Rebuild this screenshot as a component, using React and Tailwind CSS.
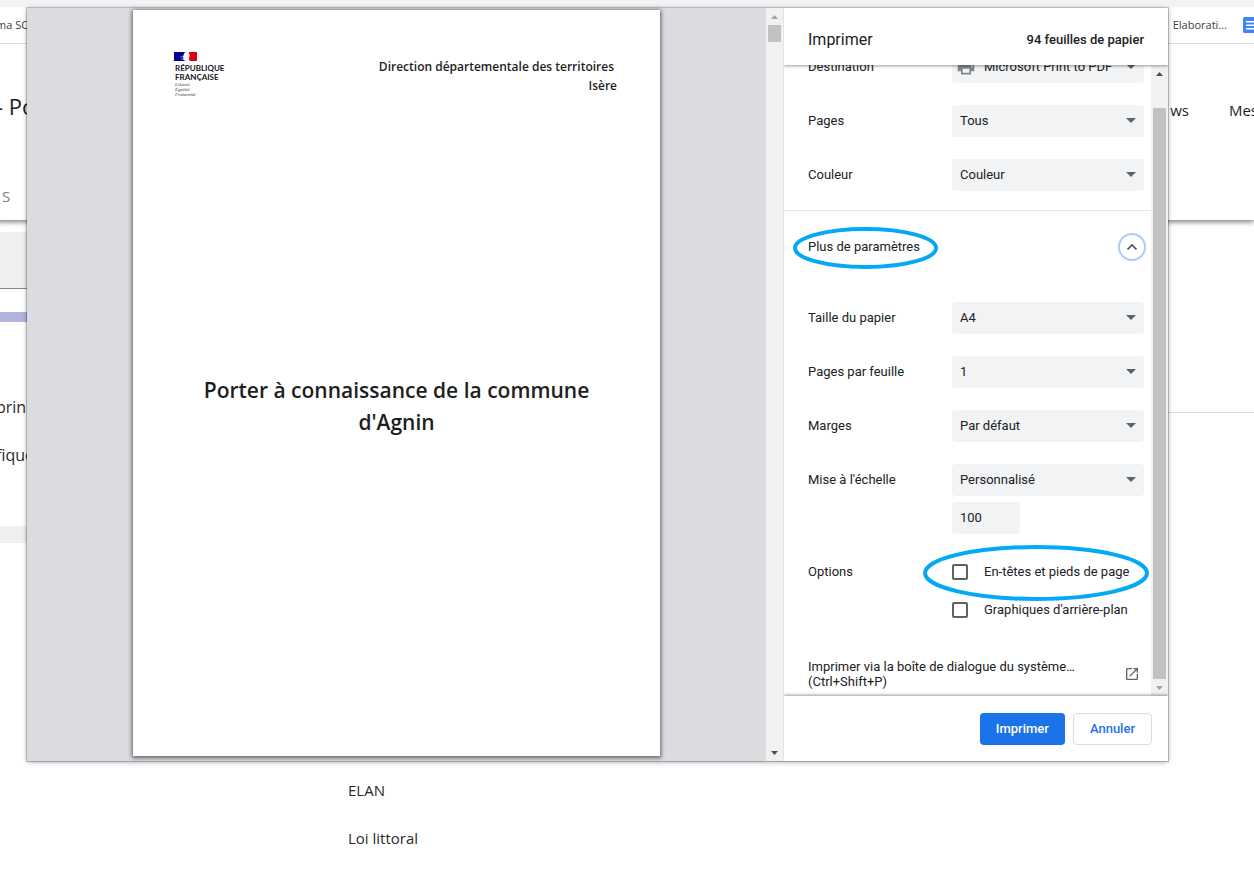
import React from "react";

function Caret() {
  return (
    <svg className="pointer-events-none absolute right-2 top-[13px] h-[5px] w-[10px]" viewBox="0 0 10 5" aria-hidden="true">
      <path d="M0 0h10L5 5z" fill="#5f6368" />
    </svg>
  );
}

function SelectBox({ id, value, icon }) {
  return (
    <div className="relative h-8">
      {icon}
      <select
        id={id}
        className={
          icon
            ? "h-8 w-full appearance-none rounded bg-[#f1f3f4] pl-8 pr-6 text-[13px] leading-5 text-[#202124]"
            : "h-8 w-full appearance-none rounded bg-[#f1f3f4] pl-2 pr-6 text-[13px] leading-5 text-[#202124]"
        }
      >
        <option>{value}</option>
      </select>
      <Caret />
    </div>
  );
}

function Row({ label, id, children }) {
  return (
    <div className="flex py-[11px] pl-6 pr-[7px]">
      {id ? (
        <label htmlFor={id} className="flex h-8 w-36 shrink-0 items-center pb-[2px]">{label}</label>
      ) : (
        <div className="flex h-8 w-36 shrink-0 items-center pb-[2px]">{label}</div>
      )}
      <div className="relative flex min-w-0 flex-1 flex-col gap-[6px]">{children}</div>
    </div>
  );
}

function Check({ label }) {
  return (
    <label className="flex h-8 items-center gap-4 whitespace-nowrap">
      <input type="checkbox" className="size-4 shrink-0 appearance-none rounded-xs border-2 border-[#5f6368] bg-white" />
      <span className="pb-[2px]">{label}</span>
    </label>
  );
}

function Arrow({ down, muted }) {
  return (
    <svg className="h-[17px] w-[17px] shrink-0" viewBox="0 0 17 17" aria-hidden="true">
      <path d={down ? "M5 7h7l-3.5 4z" : "M5 11h7L8.5 7z"} fill={muted ? "#a3a3a3" : "#505050"} />
    </svg>
  );
}

function Logo() {
  return (
    <div className="flex flex-col">
      <svg className="h-[9px] w-[23px]" viewBox="0 0 23 9" aria-hidden="true">
        <rect width="9" height="9" fill="#000091" />
        <rect x="8" width="7" height="9" fill="#fff" />
        <rect x="15" width="8" height="9" fill="#e1000f" />
        <path d="M8 0h3.500L10.200 1.200 9.600 3 8.800 4.500l.9 1.500L9 7.500 11.500 9H7V0z" fill="#000091" />
        <path d="M10.500 1.200L12.500.2l2 .5 1.200 2-.3 2.500-.8 1.800L16 9h-5l-.5-2-1.300-.8.8-1.700z" fill="#fff" />
        <path d="M6 5.500q1.500-1.500 3-.5M7 7.500l2-.8" fill="none" stroke="#b9b9e6" strokeWidth=".7" />
      </svg>
      <div className="mt-[3px] pl-px font-['Lato'] text-[8px] font-bold leading-[9px] text-[#161616]">
        RÉPUBLIQUE
        <br />
        FRANÇAISE
      </div>
      <div className="pl-px font-['Liberation_Serif'] text-[5px] font-normal italic leading-[5px] text-[#3a3a3a]">
        Liberté
        <br />
        Égalité
        <br />
        Fraternité
      </div>
    </div>
  );
}

function Background() {
  return (
    <div className="-ml-1 flex min-h-screen flex-col bg-white font-['Open_Sans',sans-serif] text-[#2a2a2a]">
      <div className="h-[7px] bg-[#f1f3f4]" />
      <div className="flex h-[37px] items-center justify-between border-b border-[#dadce0] text-[11px] text-[#3c4043]">
        <span>ma SCOT</span>
        <div className="flex items-center gap-4">
          <span>Elaborati...</span>
          <svg className="h-4 w-[11px]" viewBox="0 0 11 16" aria-hidden="true">
            <path d="M1.500 0H11v16H1.500Q0 16 0 14.500v-13Q0 0 1.500 0z" fill="#4285f4" />
            <path d="M3 4h8v1.500H3zM3 7.500h8V9H3zM3 11h8v1.500H3z" fill="#fff" />
          </svg>
        </div>
      </div>
      <header className="flex h-44 flex-col justify-between pb-3 pt-[46px] shadow-[0_2px_5px_0_rgba(0,0,0,0.5)] [clip-path:inset(0_0_-10px_0)]">
        <div className="flex items-center justify-between">
          <h1 className="text-[22px] leading-8 text-[#1e1e1e]">- Porter</h1>
          <nav className="-mr-1 flex gap-10 pt-2 text-[15px] text-[#1e1e1e]">
            <a href="#news">ws</a>
            <a href="#mes">Mes</a>
          </nav>
        </div>
        <a href="#s" className="pl-[6px] text-[15px] leading-6 text-[#808080]">S</a>
      </header>
      <div className="flex">
        <div className="w-4/5 pt-3">
          <div className="h-[57px] border-b border-[#888] bg-[#efefef]" />
          <div className="mt-[23px] h-[10px] bg-[#b3b3dd]" />
          <p className="mt-[73px] text-base leading-6">prin</p>
          <p className="mt-6 text-base leading-6">fique</p>
          <div className="mt-[59px] h-[17px] bg-[#efefef]" />
        </div>
        <div className="flex-1 pt-[192px]">
          <hr className="border-[#ddd]" />
        </div>
      </div>
      <ul className="mt-[235px] flex flex-col gap-6 pl-[352px] text-[15px] leading-6">
        <li>ELAN</li>
        <li>Loi littoral</li>
      </ul>
    </div>
  );
}

function Preview() {
  return (
    <section className="flex min-w-0 flex-1 bg-[#dadce0]">
      <div className="flex min-w-0 flex-1 justify-center pb-[5px] pt-[2px]">
        <article className="flex aspect-[527/746] h-full flex-col bg-white font-['Open_Sans'] font-semibold text-[#1e1e1e] shadow-[0_1px_4px_1px_rgba(50,54,60,0.75)]">
          <div className="flex h-[90px] justify-between pl-[41px] pr-[43px] pt-[42px]">
            <Logo />
            <p className="pt-[5px] text-right text-xs leading-[19px]">
              <span className="pr-[3px]">Direction départementale des territoires</span>
              <br />
              Isère
            </p>
          </div>
          <h2 className="mx-auto mt-[274px] w-[410px] text-center text-[21px] leading-8">
            Porter à connaissance de la commune d'Agnin
          </h2>
        </article>
      </div>
      <div className="flex w-[18px] flex-col justify-between border-r border-[#e4e4e4] bg-[#f1f1f1]">
        <div className="flex flex-col">
          <Arrow muted />
          <div className="ml-[2px] h-[17px] w-[13px] bg-[#c1c1c1]" />
        </div>
        <Arrow down />
      </div>
    </section>
  );
}

function Settings() {
  return (
    <section className="flex w-96 shrink-0 flex-col text-[13px] leading-[15px]">
      <header className="relative z-10 flex h-[57px] shrink-0 items-center justify-between bg-white px-6 pt-[6px] shadow-[0_1px_3px_rgba(0,0,0,0.4)] [clip-path:inset(0_0_-5px_0)]">
        <h2 className="text-base leading-5">Imprimer</h2>
        <span className="pb-px font-medium">94 feuilles de papier</span>
      </header>
      <div className="flex min-h-0 flex-1">
        <div className="flex min-w-0 flex-1 flex-col justify-end overflow-hidden">
          <Row label="Destination" id="dest">
            <SelectBox
              id="dest"
              value="Microsoft Print to PDF"
              icon={
                <svg className="pointer-events-none absolute left-1 top-[6px] size-5" viewBox="0 0 24 24" fill="#80868b" aria-hidden="true">
                  <path d="M19 8H5c-1.660 0-3 1.340-3 3v6h4v4h12v-4h4v-6c0-1.660-1.340-3-3-3zm-3 11H8v-5h8v5zm3-7c-.55 0-1-.45-1-1s.45-1 1-1 1 .45 1 1-.45 1-1 1zm-1-9H6v4h12V3z" />
                </svg>
              }
            />
          </Row>
          <Row label="Pages" id="pages"><SelectBox id="pages" value="Tous" /></Row>
          <Row label="Couleur" id="color"><SelectBox id="color" value="Couleur" /></Row>
          <div className="relative mb-2 mt-2 flex h-[73px] shrink-0 items-center justify-between border-t border-[#e3e5e8] pl-6 pr-[5px]">
            <span className="pb-[2px]">Plus de paramètres</span>
            <button type="button" aria-label="Plus de paramètres" className="flex size-7 items-center justify-center rounded-full border-2 border-[#aecbfa]">
              <svg className="size-4" viewBox="0 0 16 16" fill="none" stroke="#4d5156" strokeWidth="1.700" aria-hidden="true">
                <path d="M3.500 10.500L8 6l4.500 4.500" />
              </svg>
            </button>
            <svg className="pointer-events-none absolute left-[9px] top-4 h-[42px] w-[146px]" viewBox="0 0 146 42" aria-hidden="true">
              <ellipse cx="72.500" cy="21" rx="70.500" ry="19" fill="none" stroke="#03a9f4" strokeWidth="4" />
            </svg>
          </div>
          <Row label="Taille du papier" id="size"><SelectBox id="size" value="A4" /></Row>
          <Row label="Pages par feuille" id="per"><SelectBox id="per" value="1" /></Row>
          <Row label="Marges" id="margins"><SelectBox id="margins" value="Par défaut" /></Row>
          <Row label="Mise à l'échelle" id="scale">
            <SelectBox id="scale" value="Personnalisé" />
            <input type="text" defaultValue="100" aria-label="Échelle" className="h-8 w-[68px] rounded bg-[#f1f3f4] px-2 pb-[2px]" />
          </Row>
          <Row label="Options">
            <Check label="En-têtes et pieds de page" />
            <Check label="Graphiques d'arrière-plan" />
            <svg className="pointer-events-none absolute -left-[29px] -top-[11px] h-14 w-[226px]" viewBox="0 0 226 56" aria-hidden="true">
              <ellipse cx="113" cy="28" rx="111" ry="26" fill="none" stroke="#03a9f4" strokeWidth="4" />
            </svg>
          </Row>
          <a href="#system" className="flex items-center justify-between pb-[7px] pl-6 pr-[11px] pt-[22px]">
            <span>
              Imprimer via la boîte de dialogue du système…
              <br />
              (Ctrl+Shift+P)
            </span>
            <svg className="size-4" viewBox="0 0 24 24" fill="#5f6368" aria-hidden="true">
              <path d="M19 19H5V5h7V3H5a2 2 0 0 0-2 2v14a2 2 0 0 0 2 2h14c1.100 0 2-.9 2-2v-7h-2v7zM14 3v2h3.590l-9.830 9.830 1.410 1.410L19 6.410V10h2V3h-7z" />
            </svg>
          </a>
        </div>
        <div className="flex w-[17px] flex-col bg-[#f1f1f1]">
          <Arrow />
          <div className="mx-[2px] mt-[26px] flex-1 bg-[#c1c1c1]" />
          <Arrow down muted />
        </div>
      </div>
      <footer className="relative z-10 flex h-[65px] shrink-0 items-center justify-end gap-2 bg-white pr-4 font-medium shadow-[0_-1px_3px_rgba(0,0,0,0.4)] [clip-path:inset(-5px_0_0_0)]">
        <button type="button" className="h-8 rounded bg-[#1a73e8] px-4 text-white">Imprimer</button>
        <button type="button" className="h-8 rounded border border-[#dadce0] px-4 text-[#1a73e8]">Annuler</button>
      </footer>
    </section>
  );
}

export default function App() {
  return (
    <main className="relative min-h-screen overflow-hidden">
      <Background />
      <div className="absolute inset-0 z-20 flex pb-[109px] pl-[27px] pr-[86px] pt-2">
        <div role="dialog" aria-label="Imprimer" className="flex min-w-0 flex-1 bg-white font-['Roboto',sans-serif] text-[#202124] shadow-[0_0_0_1px_rgba(0,0,0,0.2),0_1px_5px_rgba(0,0,0,0.35)]">
          <Preview />
          <Settings />
        </div>
      </div>
    </main>
  );
}
